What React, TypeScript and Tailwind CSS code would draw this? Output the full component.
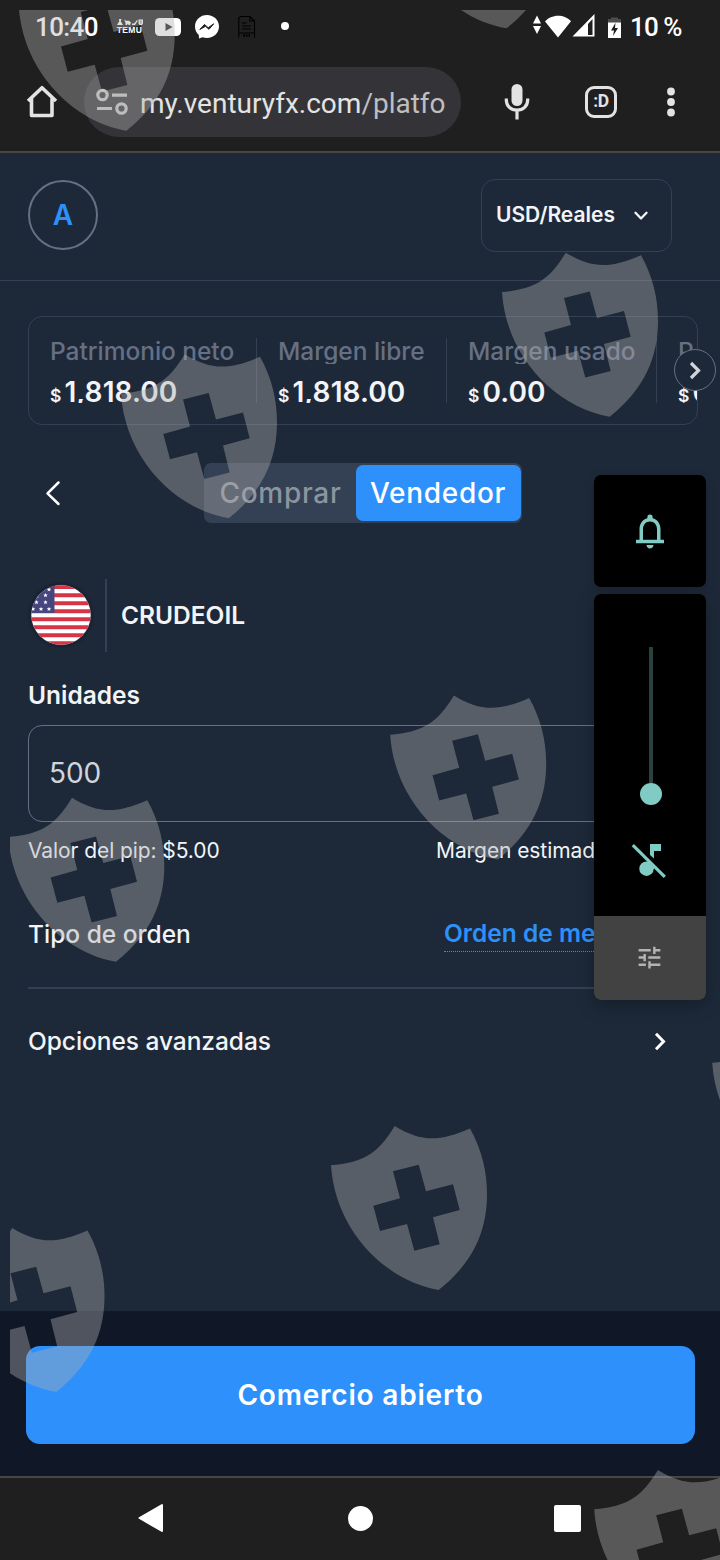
import React from "react";
import { MdTune } from "react-icons/md";

const SHIELD =
  "M0 39.3C32 36.5 47 28 63.7 0C90 16 108 16 139 2.5C151 24 156 46 156 68C156 104 143 136 107.7 164C54 155 4 104 0 39.3Z" +
  "M62 45.3L69 72.3L42.3 79.7L49 105L76 98L83.3 124.7L108.7 118.3L102 91.3L128.7 84L122 58.3L95 65.3L87.7 38.7Z";

const shieldSpots: [number, number][] = [
  [18.7, -33.3],
  [398.8, -135.7],
  [502, 252.7],
  [121, 354.2],
  [390.2, 695.5],
  [8.3, 797.7],
  [712.2, 1023.5],
  [331, 1126],
  [-51.5, 1228],
  [594.2, 1470],
];

function Shields() {
  return (
    <svg className="pointer-events-none absolute inset-0" width="720" height="1560" viewBox="0 0 720 1560">
      <clipPath id="safe">
        <rect x="10" y="10" width="710" height="1550" />
      </clipPath>
      <g clipPath="url(#safe)" fill="#b0b0b0" fillOpacity="0.4" fillRule="evenodd">
        {shieldSpots.map(([x, y]) => (
          <path key={`${x},${y}`} d={SHIELD} transform={`translate(${x} ${y})`} />
        ))}
      </g>
    </svg>
  );
}

function StatusBar() {
  return (
    <div className="flex h-[53px] items-center pl-[35px] font-[Roboto,sans-serif] text-white">
      <span className="w-[80px] shrink-0 pt-[2px] text-[26px] leading-[53px] font-medium tracking-[-0.6px] whitespace-nowrap">10:40</span>
      <div className="flex w-[29px] shrink-0 flex-col items-center">
        <svg width="28" height="7" viewBox="0 0 28 7">
          <path d="M3 0h2.500l-.7 2.300L7 6H1l2.300-3.700zM8 .5l2 1.200h3l2 1.800-1 2.500h-1.500l-.5-1.500-1 1.500H9.500V3.500zM16 4.500h2.200L21 1l.8.800L19 6h-3zM22.500.500h4.500v4l-1 1.500h-2.500l-1-1.500z" fill="#fff" />
          <path d="M23.700 2.200h2M24 4h1.600" stroke="#1f1f1f" strokeWidth=".7" />
        </svg>
        <span className="font-['Liberation_Sans',sans-serif] text-[8.5px] leading-[8px] font-bold tracking-[0.3px]">TEMU</span>
      </div>
      <svg className="ml-[11px] shrink-0" width="26" height="18" viewBox="0 0 26 18">
        <rect width="26" height="18" rx="4.500" fill="#fff" />
        <path d="M10.500 5l7 4-7 4z" fill="#1f1f1f" />
      </svg>
      <svg className="ml-[14px] shrink-0" width="24" height="24" viewBox="0 0 24 24">
        <path d="M12 0C5.300 0 0 4.900 0 11.500c0 3.500 1.400 6.300 3.800 8.400L4 23.500l3.500-1.300c1.400.5 3 .8 4.500.8 6.700 0 12-5 12-11.500S18.700 0 12 0z" fill="#fff" />
        <path d="M4.800 14.500l4.700-5 3.700 3.300 5.500-4-4.700 5.500-3.500-3z" fill="#1f1f1f" stroke="#1f1f1f" strokeLinejoin="round" />
      </svg>
      <svg className="ml-[19px] shrink-0" width="18" height="24" viewBox="0 0 18 24" fill="none" stroke="#000" strokeWidth="1.100">
        <path d="M.8 22.500V3L2.500 1.500H12l4.500 4.500v16.500M12 1.500V6h4.500M4 8h4.500M4 11h9M4 14h9M.8 18h15.700" />
        <path d="M5 20.500h7" strokeWidth="1.800" strokeDasharray="2 .7" />
      </svg>
      <span className="ml-[25px] size-2 shrink-0 -translate-y-px rounded-full bg-white" />
      <svg className="ml-[243px] shrink-0" width="92" height="26" viewBox="0 0 92 26" fill="#fff">
        <path d="M1 9.500l4-8 4 8zM1 12l4 8 4-8z" />
        <path d="M13 7.500C16 4 21 1.800 26 1.800s10 2 13 5.500L26 23.500z" />
        <path d="M40.500 22.500L62.500 0v22.500zM56 10v11h4.500V5z" fillRule="evenodd" />
        <path d="M79 3.500h7v1.500h3v4H76V5h3z" fill="#4d4d4d" />
        <path d="M76 8.500h13v15.500H76z" />
        <path d="M83.500 8.800L79 16.500h3l-1 5.500 5-8h-3z" fill="#1f1f1f" />
      </svg>
      <span className="ml-[6px] pt-[2px] text-[26px] font-medium tracking-[-0.9px] whitespace-nowrap">10 %</span>
    </div>
  );
}

function BrowserBar() {
  return (
    <div className="flex h-[98px] items-center pb-[1px] pl-[26px] font-[Roboto,sans-serif]">
      <svg className="shrink-0" width="32" height="33" viewBox="0 0 32 33" fill="none" stroke="#e3e3e3" strokeWidth="3.600" strokeLinejoin="round">
        <path d="M2 16L16 2.700 30 16M5.500 13.500V30.500H26V13.500" />
      </svg>
      <div className="ml-[26px] flex h-[70px] w-[377px] shrink-0 items-center rounded-full bg-[#343438] pl-[12px]">
        <svg className="shrink-0" width="33" height="28" viewBox="0 0 33 28" fill="none" stroke="#c7c7c7" strokeWidth="3.200">
          <circle cx="6.500" cy="7" r="4.700" />
          <circle cx="25.500" cy="20.500" r="4.700" />
          <path d="M16 7.200h15M1 20.500h15" />
        </svg>
        <span className="ml-[11px] pt-[4px] text-[28px] whitespace-nowrap text-[#e3e3e3]">
          my.venturyfx.com<span className="text-[#bfbfbf]">/platfo</span>
        </span>
      </div>
      <svg className="ml-[43px] shrink-0" width="26" height="37" viewBox="0 0 26 37" fill="none" stroke="#e3e3e3" strokeWidth="3.600">
        <rect x="7.500" y="1" width="11" height="22" rx="5.500" fill="#e3e3e3" stroke="none" />
        <path d="M2.300 15.500v1.500c0 6 4.700 10.200 10.700 10.200S23.700 23 23.700 17v-1.500M13 27v9.500" strokeWidth="3.200" />
      </svg>
      <div className="ml-[55px] flex h-[32px] w-[32px] shrink-0 items-center justify-center rounded-[9px] border-[3.5px] border-[#e3e3e3] text-[17.5px] font-bold tracking-[-0.5px] text-[#e3e3e3]">
        :D
      </div>
      <svg className="ml-[49px] shrink-0" width="10" height="30" viewBox="0 0 10 30" fill="#e3e3e3">
        <circle cx="5" cy="4.500" r="3.900" />
        <circle cx="5" cy="15" r="3.900" />
        <circle cx="5" cy="25.500" r="3.900" />
      </svg>
    </div>
  );
}

function Stat({ label, value, className }: { label: string; value: string; className: string }) {
  return (
    <div className={`h-[65px] shrink-0 overflow-hidden pl-[21px] whitespace-nowrap ${className}`}>
      <div className="h-[26px] overflow-hidden text-[24.5px] leading-[27px] font-medium tracking-[-0.03px] text-[#667085]">{label}</div>
      <div className="mt-[10px] flex h-[29px] items-baseline overflow-hidden leading-[36px] font-semibold text-[#f2f4f7]">
        <span className="mr-[3px] text-[17.5px]">$</span>
        <span className="text-[28px] tracking-[0.1px]">{value}</span>
      </div>
    </div>
  );
}

function Account() {
  return (
    <>
      <header className="flex h-[128px] items-center justify-between border-b border-[#344054] pr-[48px] pb-[3px] pl-[28px]">
        <div className="flex size-[70px] items-center justify-center rounded-full border-2 border-[#667085] text-[28px] font-semibold text-[#2e90fa]">
          A
        </div>
        <div className="flex h-[73px] w-[191px] items-center rounded-[14px] border border-[#344054] pl-[14px] text-[21px] font-semibold text-[#f2f4f7]">
          <span className="w-[138px]">USD/Reales</span>
          <svg width="14" height="10" viewBox="0 0 14 10" fill="none" stroke="#f2f4f7" strokeWidth="2.300" strokeLinecap="round" strokeLinejoin="round" className="mt-[2px]">
            <path d="M1.500 1.800L7 7.500l5.500-5.700" />
          </svg>
        </div>
      </header>
      <div className="relative mt-[35px] ml-[28px] flex h-[109px] w-[670px] rounded-[14px] border border-[#344054] pt-[21px]">
        <div className="flex w-full overflow-hidden">
          <Stat label="Patrimonio neto" value="1,818.00" className="w-[228px] border-r border-[#344054]" />
          <Stat label="Margen libre" value="1,818.00" className="w-[190px] border-r border-[#344054]" />
          <Stat label="Margen usado" value="0.00" className="w-[210px] border-r border-[#344054]" />
          <Stat label="P" value="0" className="w-[210px]" />
        </div>
        <div className="absolute top-[32px] -right-[18.5px] flex size-[42px] items-center justify-center rounded-full border border-[#667085] bg-[#1d2939]">
          <svg width="12" height="19" viewBox="0 0 12 19" fill="none" stroke="#d0d5dd" strokeWidth="3.200">
            <path d="M2 2l7.500 7.500L2 17" />
          </svg>
        </div>
      </div>
    </>
  );
}

function SideToggle() {
  return (
    <div className="mt-[38px] flex h-[60px] items-center">
      <svg className="ml-[45px] shrink-0" width="16" height="26" viewBox="0 0 16 26" fill="none" stroke="#fff" strokeWidth="2.500" strokeLinecap="round" strokeLinejoin="round">
        <path d="M13.500 2.500L2.500 13.300l11 10.700" />
      </svg>
      <div className="ml-[143px] flex h-[60px] w-[318px] items-center rounded-[7px] bg-[#344054] pr-[1px] text-[28px] font-medium tracking-[0.7px]">
        <span className="w-[152px] pl-[15.5px] text-[#8c959f]">Comprar</span>
        <span className="flex h-[56px] w-[165px] items-center rounded-[7px] bg-[#2e90fa] pl-[14px] text-white">Vendedor</span>
      </div>
    </div>
  );
}

const stars: [number, number][] = [
  [50, 4.500],
  [46.500, 10.300],
  [37.500, 17.200],
  [46.500, 17.200],
  [34, 24],
  [42, 24],
  [50, 24],
  [38, 11],
];

function Flag() {
  return (
    <svg width="62" height="62" viewBox="31 -1 62 62" className="shrink-0 rounded-full shadow-[0_0_3px_rgba(0,0,0,0.5)]">
      <clipPath id="disc">
        <circle cx="62" cy="30" r="29.700" />
      </clipPath>
      <g clipPath="url(#disc)">
        <rect x="30" y="-1" width="64" height="62" fill="#fff" />
        <path
          d="M30 2.100h64M30 10.200h64M30 18.200h64M30 26.200h64M30 34.200h64M30 42.200h64M30 50.200h64M30 58.200h64"
          stroke="#d83448"
          strokeWidth="4"
        />
        <rect x="30" y="0" width="25.500" height="28" fill="#46467f" />
        {stars.map(([x, y]) => (
          <path
            key={`${x},${y}`}
            d="M0-2.300L.6-.7 2.200-.7 1 .4 1.400 2 0 1-1.400 2-1 .4-2.200-.7-.6-.7Z"
            transform={`translate(${x} ${y})`}
            fill="#fff"
          />
        ))}
      </g>
    </svg>
  );
}

function OrderForm() {
  return (
    <div className="pr-[28px] pl-[28px] text-[#f2f4f7]">
      <div className="mt-[56px] flex h-[73px] items-center pl-[2px]">
        <div className="shrink-0 pb-[2px]">
          <Flag />
        </div>
        <span className="ml-[13px] h-[73px] w-[2px] bg-[#344054]" />
        <span className="ml-[14px] text-[24.5px] font-semibold">CRUDEOIL</span>
      </div>
      <div className="mt-[28px] h-[30px] text-[24.5px] leading-[30px] font-semibold">Unidades</div>
      <div className="mt-[15px] flex h-[97px] items-center rounded-[14px] border border-[#667085] pb-[2px] pl-[20px] text-[28px] tracking-[-0.1px] text-[#d0d5dd]">500</div>
      <div className="mt-[15px] flex h-[28px] text-[21px] leading-[28px] tracking-[-0.08px] whitespace-nowrap">
        <span className="w-[408px] shrink-0">Valor del pip: $5.00</span>
        <span className="w-[180px]">Margen estimado</span>
      </div>
      <div className="mt-[53px] flex h-[34px] text-[24.500px] leading-[30px] whitespace-nowrap">
        <span className="w-[416px] shrink-0 pt-px font-medium">Tipo de orden</span>
        <span className="h-[34px] w-[220px] border-b border-dotted border-[#2e90fa] font-semibold text-[#2e90fa]">
          Orden de mercado
        </span>
      </div>
      <div className="mt-[35px] h-[2px] bg-[#344054]" />
      <div className="mt-[34px] flex h-[36px] items-center justify-between pr-[26px]">
        <span className="text-[24.5px] font-medium tracking-[-0.05px]">Opciones avanzadas</span>
        <svg width="12" height="19" viewBox="0 0 12 19" fill="none" stroke="#fff" strokeWidth="3">
          <path d="M2 1.800l7.500 7.700L2 17.200" />
        </svg>
      </div>
    </div>
  );
}

function VolumePanel() {
  return (
    <div className="absolute top-[475px] left-[594px] flex w-[112px] flex-col gap-[7px]">
      <div className="flex h-[112px] items-center justify-center rounded-[7px] bg-black shadow-[0_4px_12px_rgba(0,0,0,0.15)]">
        <svg width="42" height="42" viewBox="0 0 24 24" fill="#80cbc4">
          <path d="M12 22c1.100 0 2-.9 2-2h-4c0 1.100.9 2 2 2zM18 17v-6c0-3.070-1.630-5.640-4.500-6.320V4a1.500 1.500 0 0 0-3 0v.68C7.640 5.360 6 7.920 6 11v6H4v2h16v-2h-2zm-2 0H8v-6c0-2.480 1.510-4.500 4-4.500s4 2.020 4 4.500v6z" />
        </svg>
      </div>
      <div className="h-[406px] overflow-hidden rounded-[7px] bg-black shadow-[0_6px_18px_rgba(0,0,0,0.25)]">
        <div className="flex h-[322px] flex-col items-center pt-[53px]">
          <div className="ml-[2px] h-[136px] w-[4px] bg-[#294240]" />
          <div className="ml-[2px] size-[22px] rounded-full bg-[#80cbc4]" />
          <svg className="mt-[38px] mr-[2px]" width="36" height="36" viewBox="631 843 36 36" fill="#80cbc4">
            <path d="M650 844h11v7h-7v7.500l-4-3.500zM650 863l4 3.500v2.500h-4z" />
            <circle cx="646.500" cy="868.700" r="7.200" />
            <path d="M632.800 845.200l32 31.700" stroke="#80cbc4" strokeWidth="3.200" />
          </svg>
        </div>
        <div className="flex h-[84px] items-center justify-center bg-[#424242] pr-px pb-px">
          <MdTune size={29} color="#b3b3b3" />
        </div>
      </div>
    </div>
  );
}

export default function App() {
  return (
    <div className="relative flex h-[1560px] w-[720px] flex-col overflow-hidden bg-[#1d2939] font-[Inter,sans-serif]">
      <div className="h-[153px] shrink-0 border-b-2 border-[#464642] bg-[#1f1f1f]">
        <StatusBar />
        <BrowserBar />
      </div>
      <main className="min-h-0 flex-1">
        <Account />
        <SideToggle />
        <OrderForm />
      </main>
      <div className="h-[165px] shrink-0 bg-[#101828] pt-[35px] pr-[25px] pl-[26px]">
        <button className="block h-[98px] w-full rounded-[14px] bg-[#2e90fa] text-[28px] font-semibold tracking-[0.8px] text-white">
          Comercio abierto
        </button>
      </div>
      <nav className="flex h-[84px] shrink-0 items-center border-t-2 border-[#464646] bg-[#1f1f1f] pb-[2px]">
        <svg className="ml-[137px]" width="27" height="30" viewBox="0 0 27 30" fill="#fff" stroke="#fff" strokeWidth="2" strokeLinejoin="round">
          <path d="M25 2v26L2.500 15z" />
        </svg>
        <span className="ml-[184px] size-[25px] rounded-full bg-white" />
        <span className="ml-[181px] size-[27px] rounded-[2px] bg-white" />
      </nav>
      <Shields />
      <VolumePanel />
    </div>
  );
}
